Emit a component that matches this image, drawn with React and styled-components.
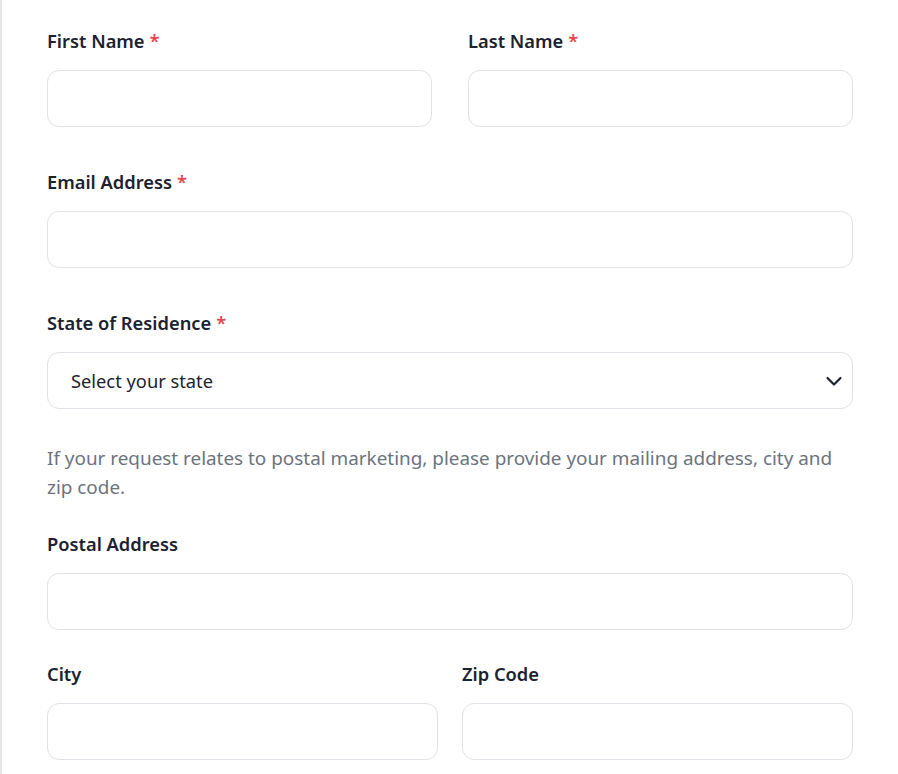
import React from "react";
import styled, { createGlobalStyle } from "styled-components";

const Global = createGlobalStyle`
  html, body { margin: 0; padding: 0; background: #ffffff; }
  body { font-family: "Noto Sans", "Open Sans", sans-serif; color: #1c2230; }
  * { box-sizing: border-box; }
`;

const Page = styled.div`
  min-height: 774px;
  border-left: 2px solid #e3e5e8;
  padding: 27px 45px 0 45px;
`;

const Row = styled.div`
  display: grid;
  grid-template-columns: 1fr 1fr;
  column-gap: ${(p) => p.$gap}px;
  margin-bottom: ${(p) => p.$mb}px;
`;

const Field = styled.div`
  display: flex;
  flex-direction: column;
  margin-bottom: ${(p) => p.$mb || 0}px;
`;

const Label = styled.label`
  font-size: 18.3px;
  line-height: 28px;
  font-weight: 600;
  color: #1c2230;
  margin-bottom: 15px;
`;

const Req = styled.span`
  color: #e5484d;
  margin-left: 5px;
`;

const Input = styled.input`
  height: 57px;
  width: 100%;
  border: 1px solid #dfe2e6;
  border-radius: 12px;
  background: #fff;
  font: inherit;
  padding: 0 22px;
  outline: none;
`;

const SelectBox = styled.div`
  height: 57px;
  border: 1px solid #dfe2e6;
  border-radius: 12px;
  display: flex;
  align-items: center;
  justify-content: space-between;
  padding: 0 6px 0 23px;
  font-size: 18.3px;
  color: #1c2230;
`;

const Note = styled.p`
  margin: 35px 0 28px;
  font-size: 18.9px;
  line-height: 29px;
  color: #6b7380;
`;

const Chevron = () => (
  <svg width="24" height="24" viewBox="0 0 24 24" fill="none" stroke="#1c2230" strokeWidth="2.2" strokeLinecap="round" strokeLinejoin="round">
    <path d="M5.5 9l6.5 6.5 6.5-6.5" />
  </svg>
);

export default function App() {
  return (
    <>
      <Global />
      <Page>
        <Row $gap={36} $mb={41}>
          <Field>
            <Label>First Name<Req>*</Req></Label>
            <Input />
          </Field>
          <Field>
            <Label>Last Name<Req>*</Req></Label>
            <Input />
          </Field>
        </Row>
        <Field $mb={41}>
          <Label>Email Address<Req>*</Req></Label>
          <Input />
        </Field>
        <Field>
          <Label>State of Residence<Req>*</Req></Label>
          <SelectBox>
            <span>Select your state</span>
            <Chevron />
          </SelectBox>
        </Field>
        <Note>
          If your request relates to postal marketing, please provide your mailing address, city and zip code.
        </Note>
        <Field $mb={30}>
          <Label>Postal Address</Label>
          <Input />
        </Field>
        <Row $gap={24} $mb={0}>
          <Field>
            <Label>City</Label>
            <Input />
          </Field>
          <Field>
            <Label>Zip Code</Label>
            <Input />
          </Field>
        </Row>
      </Page>
    </>
  );
}
